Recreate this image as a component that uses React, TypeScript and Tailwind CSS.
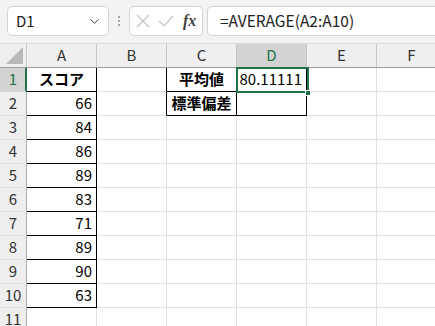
import { ChevronDown } from 'lucide-react';

const COLS = ['A', 'B', 'C', 'D', 'E', 'F'];
const COL_WIDTHS = [70, 70, 70, 70, 70, 70];
const ROW_COUNT = 11;
const SCORES = [66, 84, 86, 89, 83, 71, 89, 90, 63];

type Cell = { text: string; bold?: boolean; align: 'left' | 'center' | 'right' };

function cellAt(col: number, row: number): Cell | null {
  if (col === 0 && row === 1) return { text: 'スコア', bold: true, align: 'center' };
  if (col === 0 && row >= 2 && row <= 10) return { text: String(SCORES[row - 2]), align: 'right' };
  if (col === 2 && row === 1) return { text: '平均値', bold: true, align: 'center' };
  if (col === 2 && row === 2) return { text: '標準偏差', bold: true, align: 'center' };
  if (col === 3 && row === 1) return { text: '80.11111', align: 'right' };
  return null;
}

// cells wrapped in a thin black border
const isBoxed = (col: number, row: number) =>
  (col === 0 && row >= 1 && row <= 10) || ((col === 2 || col === 3) && row >= 1 && row <= 2);

function FormulaBar() {
  return (
    <div className="flex h-[44px] items-start border-b border-[#dadada] bg-[#f3f3f3] pt-[6px]">
      <div className="ml-[7px] flex h-[30px] w-[102px] items-center justify-between rounded-[5px] border border-[#d4d4d4] bg-white pl-[8px] pr-[6px]">
        <span className="text-[15px] text-[#222]">D1</span>
        <ChevronDown size={15} strokeWidth={1.6} className="text-[#444]" />
      </div>
      <div className="flex h-[30px] w-[20px] flex-col items-center justify-center gap-[2px]">
        <span className="h-[2px] w-[2px] rounded-full bg-[#888]" />
        <span className="h-[2px] w-[2px] rounded-full bg-[#888]" />
        <span className="h-[2px] w-[2px] rounded-full bg-[#888]" />
      </div>
      <div className="flex h-[30px] w-[74px] items-center rounded-[5px] border border-[#d4d4d4] bg-white pl-[6px]">
        <svg width="14" height="14" viewBox="0 0 14 14" className="mr-[8px]">
          <path d="M1 1 L13 13 M13 1 L1 13" stroke="#c4c4c4" strokeWidth="1.2" fill="none" />
        </svg>
        <svg width="16" height="12" viewBox="0 0 16 12" className="mr-[9px]">
          <path d="M1 6 L6 11 L15 1" stroke="#c4c4c4" strokeWidth="1.2" fill="none" />
        </svg>
        <span className="font-['Liberation_Serif',serif] text-[16px] font-bold italic leading-none text-[#444]">
          fx
        </span>
      </div>
      <div className="ml-[4px] flex h-[30px] flex-1 items-center rounded-l-[5px] border border-r-0 border-[#d4d4d4] bg-white pl-[12px]">
        <span className="text-[15.5px] text-[#222]">=AVERAGE(A2:A10)</span>
      </div>
    </div>
  );
}

function ColumnHeader() {
  return (
    <div className="flex h-[24px] border-b border-[#9f9f9f] bg-[#efefef]">
      <div className="relative w-[27px] shrink-0 border-r border-[#c6c6c6]">
        <svg width="17" height="17" viewBox="0 0 17 17" className="absolute bottom-[3px] right-[3px]">
          <path d="M17 0 L17 17 L0 17 Z" fill="#b9b9b9" />
        </svg>
      </div>
      {COLS.map((c, i) => {
        const selected = c === 'D';
        return (
          <div
            key={c}
            style={{ width: COL_WIDTHS[i] }}
            className={`flex shrink-0 items-center justify-center border-r border-[#c6c6c6] text-[15px] ${
              selected ? 'bg-[#d3d3d3] text-[#217346]' : 'text-[#333]'
            }`}
          >
            {c}
          </div>
        );
      })}
    </div>
  );
}

function GridRow({ row }: { row: number }) {
  const selectedRow = row === 1;
  return (
    <div className="flex h-[24px]">
      <div
        className={`flex w-[27px] shrink-0 items-center justify-center border-b text-[15px] ${
          selectedRow
            ? 'border-r-2 border-b-[#d3d3d3] border-r-[#217346] bg-[#d3d3d3] pl-[1px] text-[#217346]'
            : 'border-r border-b-[#e0e0e0] border-r-[#a8a8a8] bg-[#efefef] text-[#333]'
        }`}
      >
        {row}
      </div>
      {COLS.map((c, i) => {
        const cell = cellAt(i, row);
        const rightBlack = isBoxed(i, row) || isBoxed(i + 1, row);
        const bottomBlack = isBoxed(i, row) || isBoxed(i, row + 1);
        return (
          <div
            key={c}
            style={{ width: COL_WIDTHS[i] }}
            className={`flex shrink-0 items-center border-b border-r px-[4px] text-[15px] text-black ${
              rightBlack ? 'border-r-black' : 'border-r-[#e1e1e1]'
            } ${bottomBlack ? 'border-b-black' : 'border-b-[#e1e1e1]'} ${
              cell?.align === 'center' ? 'justify-center' : cell?.align === 'right' ? 'justify-end' : 'justify-start'
            } ${cell?.bold ? 'font-bold' : ''}`}
          >
            {cell?.text}
          </div>
        );
      })}
    </div>
  );
}

export default function App() {
  const rows = Array.from({ length: ROW_COUNT }, (_, i) => i + 1);

  return (
    <div className="h-[326px] w-[435px] overflow-hidden bg-white font-['Noto_Sans_CJK_JP','Noto_Sans',sans-serif]">
      <FormulaBar />
      <div className="relative">
        <ColumnHeader />
        {rows.map((r) => (
          <GridRow key={r} row={r} />
        ))}
        {/* active cell D1 */}
        <div className="pointer-events-none absolute left-[236px] top-[23px] h-[26px] w-[73px] border-2 border-[#217346]" />
        <div className="pointer-events-none absolute left-[305px] top-[46px] h-[6px] w-[6px] border border-white bg-[#217346]" />
      </div>
    </div>
  );
}
